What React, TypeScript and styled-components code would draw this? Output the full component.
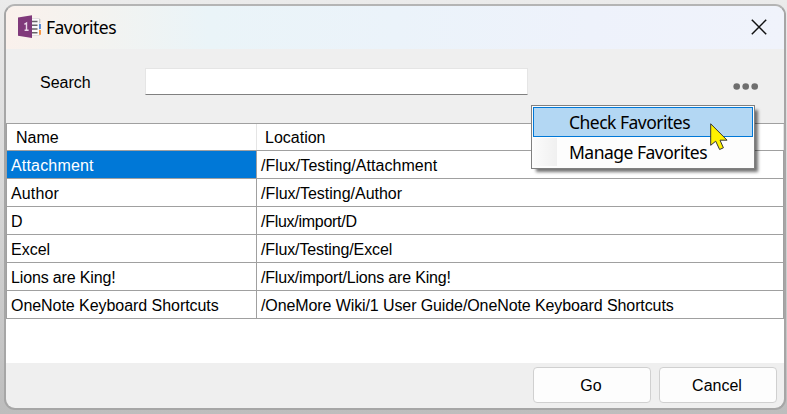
import React from "react";
import styled, { createGlobalStyle } from "styled-components";

const GlobalStyle = createGlobalStyle`
  * { box-sizing: border-box; }
  html, body { margin: 0; padding: 0; }
  body { font-family: "Liberation Sans", Arial, sans-serif; font-size: 16px; color: #000; overflow: hidden; }
`;

const Desktop = styled.div`
  width: 787px;
  height: 414px;
  padding: 4px 1px 4px 4px;
  background: linear-gradient(180deg, #ebebeb 0%, #d8d8d8 45%, #bdbdbd 100%);
`;

const Dialog = styled.div`
  display: flex;
  flex-direction: column;
  width: 782px;
  height: 406px;
  border: 2px solid #a6a6a6;
  border-top-color: #b4b4b4;
  border-radius: 11px;
  background: #efefef;
  overflow: hidden;
`;

const TitleBar = styled.header`
  display: flex;
  align-items: center;
  flex: 0 0 43px;
  padding: 0 17px 2px 12px;
  background: linear-gradient(90deg, #faf1ec 0%, #f3f3f0 12%, #eaf4f8 26%, #ebf3fa 50%, #eef2fb 75%, #f0f3fb 100%);
`;

const Title = styled.h1`
  flex: 1;
  margin: 0 0 0 5px;
  font: 400 17.5px/24px "Noto Sans", sans-serif;
  letter-spacing: -0.52px;
`;

const SearchBar = styled.div`
  display: flex;
  flex: 0 0 74px;
  padding: 19px 25px 0 34px;
`;

const SearchLabel = styled.label`
  width: 105px;
  line-height: 30px;
`;

const SearchInput = styled.input`
  width: 383px;
  height: 27px;
  padding: 0 6px;
  border: 1px solid #e5e5e5;
  border-bottom-color: #808080;
  outline: none;
  background: #fff;
  font: inherit;
`;

const MoreButton = styled.button`
  display: flex;
  margin: 15px 0 0 auto;
  padding: 0;
  border: 0;
  height: 7px;
  background: none;
`;

const Grid = styled.div`
  flex: 0 0 240px;
  border-top: 1px solid #a0a0a0;
  background: #fff;
`;

const GridRow = styled.div<{ $header?: boolean }>`
  display: grid;
  grid-template-columns: 250px 527px;
  grid-template-rows: minmax(0, 1fr);
  height: ${(p) => (p.$header ? 27 : 28)}px;
  border-bottom: 1px solid #a0a0a0;
  border-left: 1px solid #a0a0a0;
`;

const HeaderCell = styled.div`
  padding-left: 9px;
  line-height: 27px;
  border-right: 1px solid #e5e5e5;
  white-space: nowrap;
  & + & { padding-left: 8px; }
`;

const Cell = styled.div<{ $selected?: boolean; $tracking: number }>`
  padding-left: 4px;
  line-height: 29px;
  white-space: pre;
  overflow: hidden;
  border-right: 1px solid #a0a0a0;
  letter-spacing: ${(p) => p.$tracking}px;
  color: ${(p) => (p.$selected ? "#fff" : "#000")};
  background: ${(p) => (p.$selected ? "#0078d7" : "#fff")};
`;

const Footer = styled.footer`
  display: flex;
  justify-content: flex-end;
  gap: 8px;
  padding: 4px 7px 0;
`;

const Button = styled.button`
  width: 118px;
  height: 36px;
  padding: 2px 2px 0 0;
  border: 1px solid #d0d0d0;
  border-radius: 4px;
  background: #fdfdfd;
  color: #000;
  font: inherit;
`;

const Menu = styled.div`
  position: absolute;
  left: 531px;
  top: 105px;
  width: 224px;
  height: 64px;
  padding: 1px;
  border: 1px solid #808080;
  background: #fdfdfd;
  box-shadow: 4px 4px 3px -1px rgba(0, 0, 0, 0.55);
`;

const MenuItem = styled.div<{ $active?: boolean }>`
  height: 30px;
  padding-left: 35px;
  border: 1px solid ${(p) => (p.$active ? "#0078d7" : "transparent")};
  background: ${(p) => (p.$active ? "#b3d7f3" : "linear-gradient(90deg, #fbfbfb, #f0f0f0) 0 0 / 23px 100% no-repeat")};
  font: 400 17.5px/29px "Noto Sans", sans-serif;
  letter-spacing: -0.51px;
  white-space: nowrap;
`;

const Pointer = styled.svg`
  position: absolute;
  left: 709px;
  top: 121px;
`;

const favorites = [
  { name: "Attachment", nameTracking: 0.18, location: "/Flux/Testing/Attachment", locationTracking: 0.04 },
  { name: "Author", nameTracking: 0.15, location: "/Flux/Testing/Author", locationTracking: -0.02 },
  { name: "D", nameTracking: 0, location: "/Flux/import/D", locationTracking: -0.28 },
  { name: "Excel", nameTracking: 0, location: "/Flux/Testing/Excel", locationTracking: -0.12 },
  { name: "Lions are King!", nameTracking: -0.15, location: "/Flux/import/Lions are King!", locationTracking: -0.18 },
  {
    name: "OneNote Keyboard Shortcuts",
    nameTracking: -0.05,
    location: "/OneMore Wiki/1 User Guide/OneNote Keyboard Shortcuts",
    locationTracking: -0.1,
  },
];

const NotebookIcon = () => (
  <svg width="23" height="24" viewBox="0 0 23 24">
    <path d="M12 3.5h9.5v17H12z" fill="#fafafa" stroke="#d8d3d7" strokeWidth=".7" />
    <path d="M14 6.5h5.5M14 10.2h5.5M14 14h5.5M14 17.7h5.5" stroke="#686468" strokeWidth="1.4" />
    <path d="M21.7 4v4" stroke="#c8c8c8" strokeWidth="1.4" />
    <path d="M22 9v5" stroke="#3676d2" strokeWidth="1.6" />
    <path d="M22 15v4.8" stroke="#f58220" strokeWidth="1.6" />
    <path d="M0 2.6 14 .2v22.9L0 20.7z" fill="#80397b" />
    <path d="M6.4 9.4 8.5 8v7.1M6.6 15.2h4" fill="none" stroke="#ead7e9" strokeWidth="1.4" />
  </svg>
);

export default function App() {
  return (
    <Desktop>
      <GlobalStyle />
      <Dialog>
        <TitleBar>
          <NotebookIcon />
          <Title>Favorites</Title>
          <svg width="16" height="16" viewBox="0 0 16 16">
            <path d="M.8.8l14.4 14.4M15.2.8.8 15.2" stroke="#111" strokeWidth="1.5" />
          </svg>
        </TitleBar>
        <SearchBar>
          <SearchLabel htmlFor="search">Search</SearchLabel>
          <SearchInput id="search" />
          <MoreButton aria-label="More">
            <svg width="26" height="7" viewBox="0 0 26 7" fill="#6e6e6e">
              <circle cx="3.7" cy="3.5" r="3.3" />
              <circle cx="12.7" cy="3.5" r="3.3" />
              <circle cx="21.7" cy="3.5" r="3.3" />
            </svg>
          </MoreButton>
        </SearchBar>
        <Grid>
          <GridRow $header>
            <HeaderCell>Name</HeaderCell>
            <HeaderCell>Location</HeaderCell>
          </GridRow>
          {favorites.map((f, i) => (
            <GridRow key={f.name}>
              <Cell $selected={i === 0} $tracking={f.nameTracking}>{f.name}</Cell>
              <Cell $tracking={f.locationTracking}>{f.location}</Cell>
            </GridRow>
          ))}
        </Grid>
        <Footer>
          <Button>Go</Button>
          <Button>Cancel</Button>
        </Footer>
      </Dialog>
      <Menu>
        <MenuItem $active>Check Favorites</MenuItem>
        <MenuItem>Manage Favorites</MenuItem>
      </Menu>
      <Pointer width="20" height="31" viewBox="0 0 20 31">
        <path d="M1.7 2.8v21.5l5-4.1 3.9 8.3 3.8-1.7-3.4-7.6h7.1z" fill="#fff200" stroke="#333" strokeWidth="1" />
      </Pointer>
    </Desktop>
  );
}
